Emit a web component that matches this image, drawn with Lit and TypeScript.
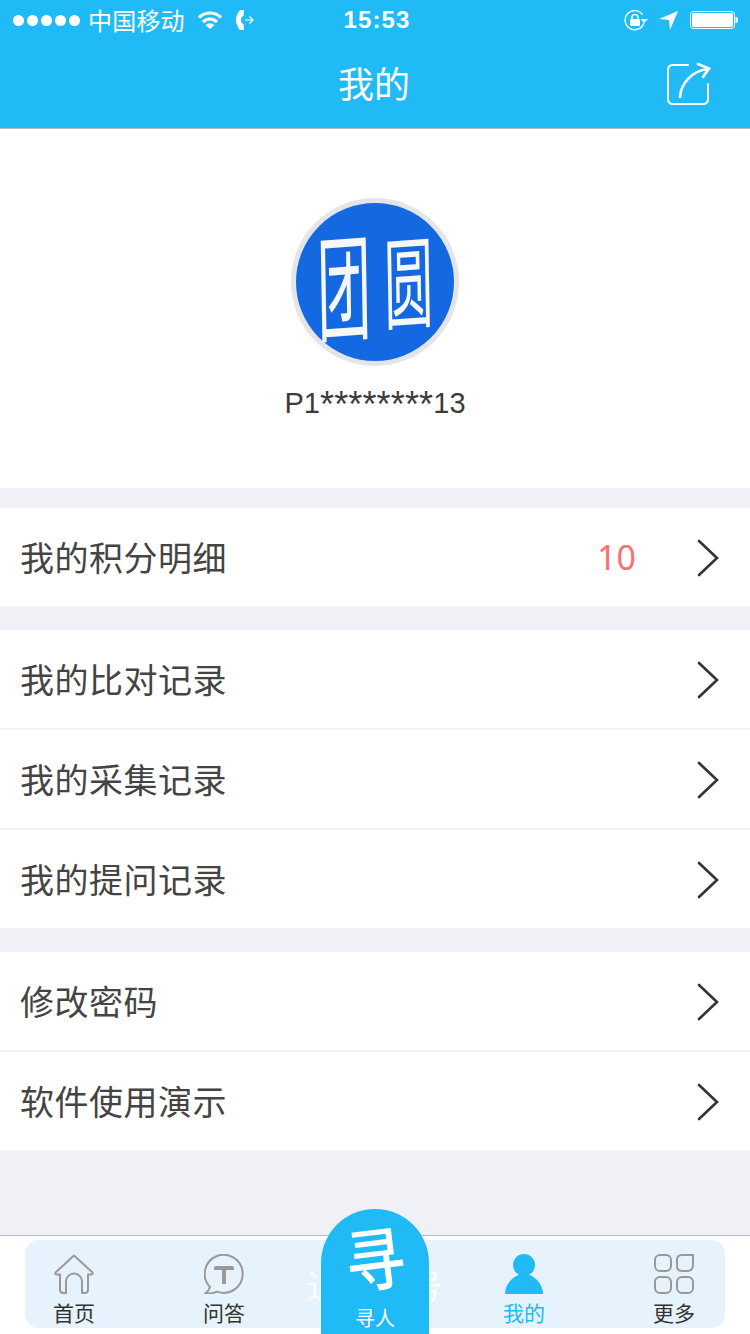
import { LitElement, html, css, svg } from "lit";
import { customElement } from "lit/decorators.js";

const chevron = html`<svg class="chev" width="24" height="38" viewBox="0 0 24 38"><path d="M3 2 L21 19 L3 36" fill="none" stroke="#333" stroke-width="2.6" stroke-linecap="round" stroke-linejoin="miter"/></svg>`;

const groups: { label: string; value?: string }[][] = [
  [{ label: "我的积分明细", value: "10" }],
  [{ label: "我的比对记录" }, { label: "我的采集记录" }, { label: "我的提问记录" }],
  [{ label: "修改密码" }, { label: "软件使用演示" }],
];

const homeIcon = svg`<path d="M20 1.5 L38.5 18.5 Q39.5 20.5 37 20.5 L34 20.5 V35.5 Q34 39 30.5 39 H28 V27.5 A8 8 0 0 0 12 27.5 V39 H9.5 Q6 39 6 35.5 V20.5 L3 20.5 Q.5 20.5 1.5 18.5 Z" fill="none" stroke="#999" stroke-width="2" stroke-linejoin="round"/>`;
const askIcon = svg`<path d="M6 33 A19 19 0 1 1 13 37.6 Q8 40 1 39.5 Q5 37 6 33 Z" fill="none" stroke="#999" stroke-width="2" stroke-linejoin="round"/><path d="M10 14 Q10 12 12 12 H28 Q30 12 30 14 V16 H22 V30 H18 V16 H10 Z" fill="#999"/>`;
const meIcon = svg`<circle cx="20" cy="11" r="11" fill="#20baf7"/><path d="M1 40 C1 30 10 20 20 20 C30 20 39 30 39 40 Q39 40 37 40 H3 Q1 40 1 40 Z" fill="#20baf7"/>`;
const moreIcon = svg`<g fill="none" stroke="#999" stroke-width="2"><rect x="1" y="1" width="16" height="16" rx="5"/><path d="M23 6 Q23 1 28 1 H39 V11 Q39 17 33 17 H28 Q23 17 23 12 Z"/><rect x="1" y="23" width="16" height="16" rx="5"/><rect x="23" y="23" width="16" height="16" rx="5"/></g>`;

const tabs = [
  { label: "首页", icon: homeIcon },
  { label: "问答", icon: askIcon },
  null,
  { label: "我的", icon: meIcon, active: true },
  { label: "更多", icon: moreIcon },
];

@customElement("app-root")
export class AppRoot extends LitElement {
  static styles = css`
    :host { display: flex; flex-direction: column; width: 750px; height: 1334px; background: #f0f1f6; position: relative; overflow: hidden; font-family: "Noto Sans CJK SC", "Noto Sans", sans-serif; color: #444; }
    .top { background: #20baf7; color: #fff; border-bottom: 1px solid #b8b8b8; flex: none; }
    .status { height: 40px; display: grid; grid-template-columns: 1fr auto 1fr; align-items: center; padding: 0 11px 0 13px; }
    .s-left, .s-right { display: flex; align-items: center; }
    .s-right { justify-content: flex-end; }
    .dots { display: flex; gap: 3px; }
    .dot { width: 11px; height: 11px; border-radius: 50%; background: #fff; }
    .carrier { font-size: 24px; line-height: 40px; margin: 0 13px 0 8px; letter-spacing: .2px; }
    .time { font-family: "Liberation Sans", sans-serif; font-size: 24px; font-weight: 700; letter-spacing: 1.1px; position: relative; left: 1px; }
    .nav { height: 88px; display: flex; align-items: center; justify-content: center; position: relative; }
    .nav-title { font-size: 36px; line-height: 88px; position: relative; top: -2px; left: -1px; }
    .share { position: absolute; left: 667px; top: 22px; }
    .profile { height: 359px; background: #fff; flex: none; display: flex; flex-direction: column; align-items: center; padding-top: 69px; box-sizing: border-box; }
    .avatar { width: 168px; height: 168px; box-sizing: border-box; border: 5px solid #e4e5e8; border-radius: 50%; background: #1469e3; color: #f6f7f9; display: flex; align-items: center; justify-content: center; gap: 13px; }
    .avatar span { display: block; font-weight: 400; position: relative; }
    .t1 { font-size: 54px; line-height: 54px; transform: scaleY(2.15) rotate(-2deg); top: 0; }
    .t2 { font-size: 49px; line-height: 49px; transform: scaleY(2.05) rotate(-2deg); top: -6px; }
    .name { margin-top: 17px; font-family: "Liberation Sans", sans-serif; font-size: 29px; line-height: 40px; color: #3c3c3c; }
    .stars { font-size: 36px; line-height: 0; letter-spacing: .15px; vertical-align: -4px; }
    .group { margin-top: 20px; display: flex; flex-direction: column; gap: 2px; flex: none; }
    .group + .group { margin-top: 24px; }
    .row { height: 98px; background: #fff; display: flex; align-items: center; padding: 0 30px 0 20px; }
    .label { flex: 1; font-size: 34px; line-height: 98px; color: #444; letter-spacing: 0.5px; }
    .value { font-family: "Noto Sans", sans-serif; font-size: 34px; color: #f87272; margin-right: 60px; }
    .chev { position: relative; top: 1px; }
    .spacer { flex: 1; }
    .bar { flex: none; border-top: 1px solid #b8b8b8; background: #fff; padding: 4px 25px 6px; box-sizing: border-box; height: 99px; }
    .tabs { height: 88px; background: #e6f3fc; border-radius: 14px; }
    .tabgrid { margin: 0 -25px 0 -26px; display: grid; grid-template-columns: repeat(5, 150px); }
    .tab { display: flex; flex-direction: column; align-items: center; padding-top: 14px; font-size: 21px; line-height: 30px; color: #333; }
    .tab svg { display: block; margin-bottom: 3px; }
    .tab.active { color: #20baf7; }
    .ghost { position: absolute; left: 0; right: 0; top: 1262px; text-align: center; font-size: 34px; line-height: 46px; color: #fff; opacity: .8; }
    .finder { position: absolute; left: 321px; top: 1209px; width: 108px; height: 125px; border-radius: 54px 54px 0 0; background: #20baf7; color: #fff; display: flex; flex-direction: column; align-items: center; }
    .xun { font-size: 60px; line-height: 80px; height: 84px; font-weight: 500; margin-top: 12px; transform: translateY(-5px) rotate(-7deg) scaleY(1.15); }
    .ren { font-size: 20px; line-height: 26px; }
  `;

  render() {
    return html`
      <div class="top">
        <div class="status">
          <div class="s-left">
            <div class="dots">${[0, 1, 2, 3, 4].map(() => html`<div class="dot"></div>`)}</div>
            <div class="carrier">中国移动</div>
            <svg width="24" height="18" viewBox="0 0 24 18"><path d="M1 6.5 C7 .5 17 .5 23 6.5 M5 11 C9 7 15 7 19 11" fill="none" stroke="#fff" stroke-width="3.2"/><path d="M7.5 14 Q12 10.5 16.5 14 L12 18 Z" fill="#fff"/></svg>
            <svg style="margin-left:14px" width="18" height="20" viewBox="0 0 18 20"><path d="M4 0 L8 0 L7.5 6 L5.5 7 Q4.5 10 5.5 13 L7.5 14 L8 20 L4 20 Q0 15 0 10 Q0 5 4 0 Z" fill="#fff"/><path d="M9 10 H17 M13.5 6.5 L17 10 L13.5 13.5" fill="none" stroke="#fff" stroke-width="1.2"/></svg>
          </div>
          <div class="time">15:53</div>
          <div class="s-right">
            <svg width="24" height="21" viewBox="0 0 24 21"><path d="M18.5 4.5 A9.6 9.6 0 1 0 20 12.5" fill="none" stroke="#fff" stroke-width="1.4"/><path d="M16.5 9 H24 L20 13 Z" fill="#fff"/><rect x="6" y="9" width="10" height="7" rx="1" fill="#fff"/><path d="M8 9 V7.5 A3 3 0 0 1 14 7.5 V9" fill="none" stroke="#fff" stroke-width="1.6"/></svg>
            <svg style="margin-left:11px" width="19" height="19" viewBox="0 0 19 19"><path d="M19 0 L11 19 L10 9 L0 8 Z" fill="#fff"/></svg>
            <svg style="margin-left:12px" width="49" height="20" viewBox="0 0 49 20"><rect x=".5" y="1.5" width="44" height="17" rx="3" fill="none" stroke="#fff"/><rect x="2" y="3" width="41" height="14" rx="2" fill="#fff"/><path d="M45.5 7 H46 Q48 7 48 9 V11 Q48 13 46 13 H45.5 Z" fill="#fff"/></svg>
          </div>
        </div>
        <div class="nav">
          <div class="nav-title">我的</div>
          <svg class="share" width="44" height="44" viewBox="0 0 44 44">
            <path d="M21 3 H6 Q1 3 1 8 V37 Q1 42 6 42 H36 Q41 42 41 37 V22" fill="none" stroke="#fff" stroke-width="2" stroke-linecap="round"/>
            <path d="M13 35 C14 22 24 9 41 7 M31 2 L42 6.5 L36 15" fill="none" stroke="#fff" stroke-width="2.6" stroke-linecap="round"/>
          </svg>
        </div>
      </div>

      <div class="profile">
        <div class="avatar"><span class="t1">团</span><span class="t2">圆</span></div>
        <div class="name">P1<span class="stars">********</span>13</div>
      </div>

      ${groups.map(
        (g) => html`<div class="group">
          ${g.map(
            (r) => html`<div class="row">
              <div class="label">${r.label}</div>
              ${r.value ? html`<div class="value">${r.value}</div>` : ""}
              ${chevron}
            </div>`
          )}
        </div>`
      )}
      <div class="spacer"></div>

      <div class="bar">
        <div class="tabs">
          <div class="tabgrid">
            ${tabs.map((t) =>
              t
                ? html`<div class="tab ${t.active ? "active" : ""}">
                    <svg width="40" height="40" viewBox="0 0 40 40">${t.icon}</svg>
                    <div>${t.label}</div>
                  </div>`
                : html`<div></div>`
            )}
          </div>
        </div>
      </div>
      <div class="ghost">退出账号</div>
      <div class="finder">
        <div class="xun">寻</div>
        <div class="ren">寻人</div>
      </div>
    `;
  }
}
